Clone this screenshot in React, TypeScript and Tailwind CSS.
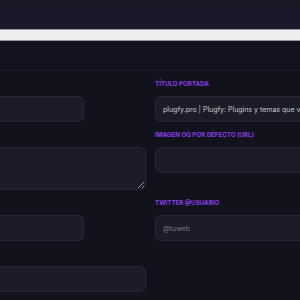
import React from "react";

const labelCls =
  "block h-[12px] leading-[12px] mb-[6px] text-[6.2px] font-bold tracking-[0px] uppercase text-[#8b3fe8] whitespace-nowrap";
const inputCls =
  "block w-full h-[26px] rounded-[6px] border border-[#272736] bg-[#1c1c28] px-[7px] text-[7px] text-[#c9c9d2] placeholder:text-[#767684] outline-none";

export default function App() {
  return (
    <div
      className="w-[300px] h-[300px] overflow-hidden bg-[#12121d]"
      style={{ fontFamily: "Inter, 'Noto Sans', sans-serif" }}
    >
      <div className="h-[29px] bg-gradient-to-b from-[#181826] to-[#1a1a2b]" />
      <div className="h-[12px] border-y border-[#9a9aa6] bg-[#eeeeef]" />
      <div className="h-[30px] bg-[#13131f] border-b border-[#1e1e2b]" />
      <div className="pt-[7px] ml-[-100px] grid grid-cols-[246px_246px] gap-x-[9px] gap-y-[7px]">
        <div>
          <span className={labelCls} />
          <input className={inputCls + " !w-[184px]"} />
        </div>
        <div>
          <span className={labelCls}>Título portada</span>
          <input
            className={inputCls}
            defaultValue="plugfy.pro | Plugfy: Plugins y temas que venden"
          />
        </div>
        <div>
          <span className={labelCls} />
          <textarea className="block w-full h-[43px] rounded-[6px] border border-[#272736] bg-[#1c1c28] px-[7px] text-[7px] text-[#c9c9d2] outline-none" />
        </div>
        <div>
          <span className={labelCls}>Imagen OG por defecto (URL)</span>
          <input className={inputCls} />
        </div>
        <div>
          <span className={labelCls} />
          <input className={inputCls + " !w-[184px]"} />
        </div>
        <div>
          <span className={labelCls}>Twitter @usuario</span>
          <input className={inputCls} placeholder="@tuweb" />
        </div>
        <div>
          <span className={labelCls} />
          <input className={inputCls} />
        </div>
        <div />
      </div>
    </div>
  );
}
